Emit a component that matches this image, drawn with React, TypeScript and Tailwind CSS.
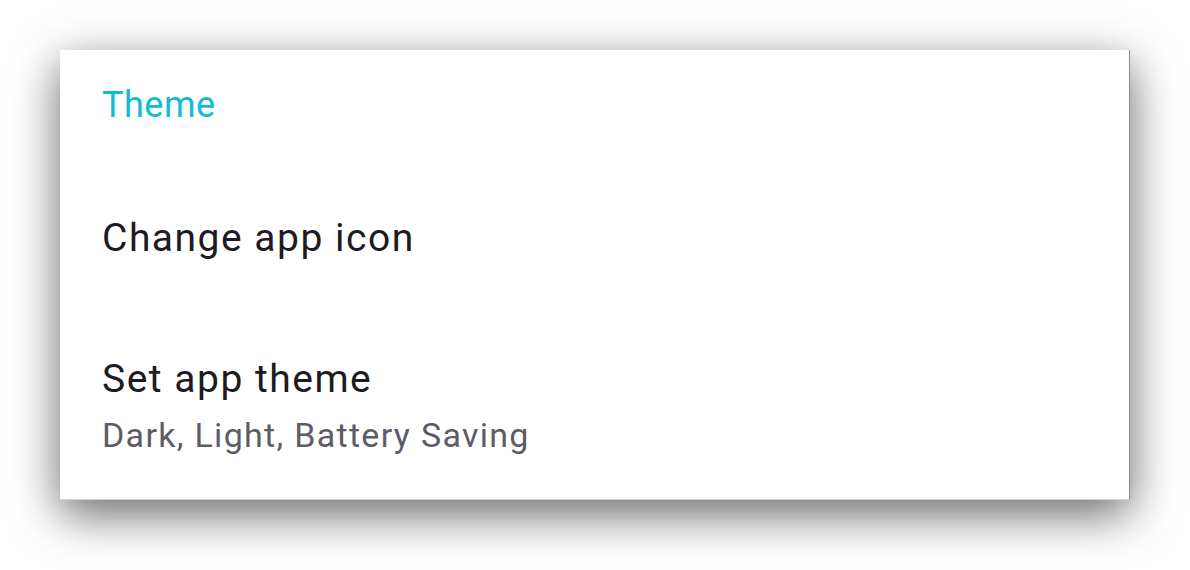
import React from "react";

export default function App() {
  return (
    <div className="w-[1190px] h-[570px] bg-white overflow-hidden" style={{ fontFamily: "Roboto, 'Noto Sans', sans-serif" }}>
      <div className="ml-[60px] mt-[50px] w-[1070px] h-[450px] bg-white border-r border-b border-r-[#8a8a8a] border-b-[#d0d0d0] shadow-[0_14px_44px_rgba(0,0,0,0.6)] flex flex-col pl-[42px] pt-[34px]">
        <div className="text-[36px] leading-[42px] tracking-[0.5px] text-[#0fbcd4]">Theme</div>
        <div className="mt-[90px] text-[39px] leading-[45px] tracking-[1.5px] text-[#1c1b1f]">Change app icon</div>
        <div className="mt-[96px] text-[39px] leading-[45px] tracking-[1.5px] text-[#1c1b1f]">Set app theme</div>
        <div className="mt-[13px] text-[34px] leading-[40px] tracking-[1.3px] text-[#5d5c66]">Dark, Light, Battery Saving</div>
      </div>
    </div>
  );
}
